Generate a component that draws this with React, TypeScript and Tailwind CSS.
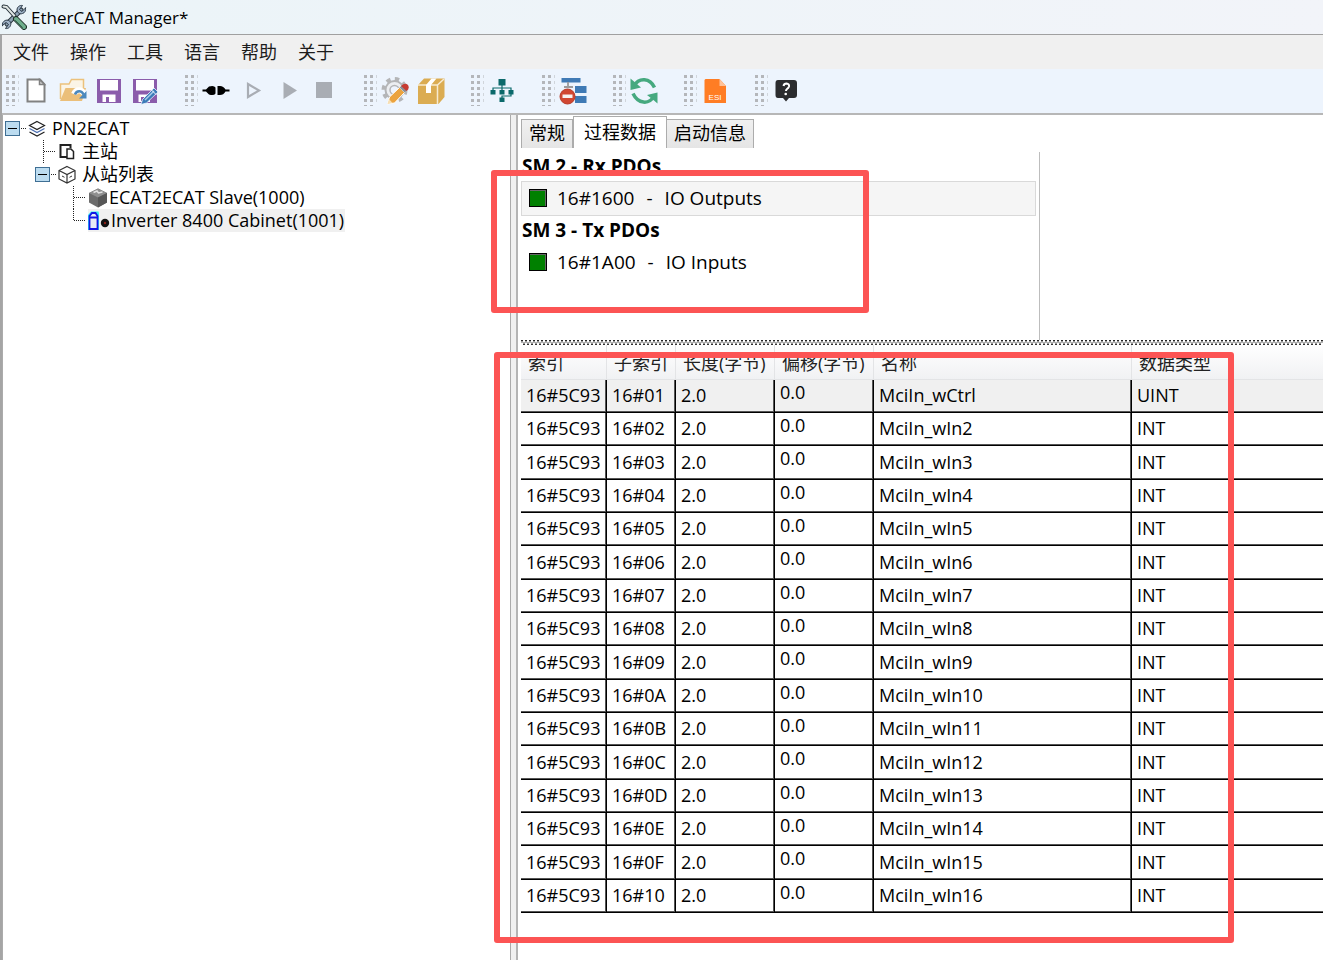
import React from 'react';

const menus = ['文件', '操作', '工具', '语言', '帮助', '关于'];

const entries = [
  { sub: '16#01', name: 'MciIn_wCtrl', type: 'UINT' },
  { sub: '16#02', name: 'MciIn_wIn2', type: 'INT' },
  { sub: '16#03', name: 'MciIn_wIn3', type: 'INT' },
  { sub: '16#04', name: 'MciIn_wIn4', type: 'INT' },
  { sub: '16#05', name: 'MciIn_wIn5', type: 'INT' },
  { sub: '16#06', name: 'MciIn_wIn6', type: 'INT' },
  { sub: '16#07', name: 'MciIn_wIn7', type: 'INT' },
  { sub: '16#08', name: 'MciIn_wIn8', type: 'INT' },
  { sub: '16#09', name: 'MciIn_wIn9', type: 'INT' },
  { sub: '16#0A', name: 'MciIn_wIn10', type: 'INT' },
  { sub: '16#0B', name: 'MciIn_wIn11', type: 'INT' },
  { sub: '16#0C', name: 'MciIn_wIn12', type: 'INT' },
  { sub: '16#0D', name: 'MciIn_wIn13', type: 'INT' },
  { sub: '16#0E', name: 'MciIn_wIn14', type: 'INT' },
  { sub: '16#0F', name: 'MciIn_wIn15', type: 'INT' },
  { sub: '16#10', name: 'MciIn_wIn16', type: 'INT' }
];

const columns = ['索引', '子索引', '长度(字节)', '偏移(字节)', '名称', '数据类型'];

const ToolsLogo = () => (
  <svg width="26" height="26" viewBox="0 0 26 26" fill="none" strokeLinecap="round">
    <path d="M6 20 L20 6" stroke="#26323a" strokeWidth="5" />
    <path d="M6 20 L20 6" stroke="#8fa3b5" strokeWidth="3" />
    <path d="M24.500 4 L21 7.500 L18.500 5.500 L21.500 1.500 C18.500 1 16 3 16 6 C16.500 9 19 10.500 21.500 9.500 C24 8.800 25 6.500 24.500 4Z" fill="#9fb2c6" stroke="#2c3a48" />
    <path d="M1.500 21.500 L5 18.500 L7.500 20.500 L4.500 24.500 C7.500 25 10 22.500 9.800 19.500 C9.500 16.500 6.500 15.500 4.200 16.500 C2 17.500 1 19.500 1.500 21.500Z" fill="#9fb2c6" stroke="#2c3a48" />
    <path d="M2.500 2.500 L5.500 3 L13.500 12" stroke="#26323a" strokeWidth="4" />
    <path d="M2.500 2.500 L5.500 3 L13.500 12" stroke="#dfe6e4" strokeWidth="2" />
    <path d="M15 15 L23 23" stroke="#1f2f29" strokeWidth="6" />
    <path d="M15 15 L23 23" stroke="#6fae8c" strokeWidth="4" />
    <path d="M14.500 16.500 L21.500 23.500" stroke="#34644c" strokeWidth="1" />
  </svg>
);

const Grip = () => (
  <svg width="13" height="32" viewBox="0 0 13 32" fill="#b4b6ba" className="shrink-0">
    {[0, 6, 12, 18, 24].map((y) => (
      <g key={y}>
        <rect x="0" y={y} width="3" height="3" />
        <rect x="6" y={y} width="3" height="3" />
        <rect x="12" y={y} width="1" height="3" opacity="0.5" />
      </g>
    ))}
    <rect x="0" y="30" width="3" height="1" />
    <rect x="6" y="30" width="3" height="1" />
  </svg>
);

const NewIcon = () => (
  <svg width="28" height="28" viewBox="0 0 28 28">
    <path d="M4.500 2.500 H17 L21.500 7.500 V24.500 H4.500Z" fill="#fff" stroke="#818181" strokeWidth="2" />
    <path d="M16.500 2.500 V7.500 H21.500Z" fill="#d5d5d5" stroke="#818181" strokeWidth="1.500" />
  </svg>
);

const OpenIcon = () => (
  <svg width="28" height="28" viewBox="0 0 28 28">
    <path d="M1.500 22 V7 H10 L12.500 2.500 H24.500 V11" fill="#fbf4e6" stroke="#ecc17c" strokeWidth="1.500" />
    <path d="M1 24 L6.500 11 H27 L23 24Z" fill="#ebbf7a" />
    <path d="M15 17 C17 12 23 12 25 17" fill="none" stroke="#fff" strokeWidth="6" />
    <path d="M16 17.500 C17.500 13.500 22.500 13 24.500 17.500" fill="none" stroke="#4a88bd" strokeWidth="2.500" />
    <path d="M27.500 14 V21.500 H20Z" fill="#4a88bd" />
  </svg>
);

const SaveIcon = () => (
  <svg width="28" height="28" viewBox="0 0 28 28">
    <path d="M2 2 H26 V26 H2Z" fill="#8b5cab" />
    <path d="M5 3 H23 V13.500 H5Z" fill="#fff" />
    <path d="M7.500 17.500 H20.500 V25 H7.500Z" fill="#fff" />
    <path d="M11 20 H14 V25 H11Z" fill="#8b5cab" />
  </svg>
);

const SaveEditIcon = () => (
  <svg width="28" height="28" viewBox="0 0 28 28">
    <path d="M2 2 H26 V26 H2Z" fill="#8b5cab" />
    <path d="M5 3 H23 V13.500 H5Z" fill="#fff" />
    <path d="M7.500 17.500 H19 V25 H7.500Z" fill="#fff" />
    <path d="M10 20 H13 V24 H10Z" fill="#8b5cab" />
    <path d="M10 27.500 L11.500 22.500 L23 11 L27 15 L15.500 26Z" fill="#3b7bb8" stroke="#eef4fd" strokeWidth="0.800" />
    <path d="M14 23 L23 14" stroke="#a9cdea" strokeWidth="1.500" />
    <path d="M20.500 13 L25.500 18" stroke="#eef4fd" strokeWidth="1" />
  </svg>
);

const ConnectIcon = () => (
  <svg width="28" height="28" viewBox="0 0 28 28">
    <path d="M0.500 12.500 H4 L7 9.500 Q12 8 13.500 10.500 V16.500 Q12 19 7 17.500 L4 14.500 H0.500Z" />
    <path d="M15.500 9 H18 Q21.500 9 23.500 12.500 H27.500 V14.500 H23.500 Q21.500 18 18 18 H15.500Z" />
  </svg>
);

const StepIcon = () => (
  <svg width="28" height="28" viewBox="0 0 28 28">
    <path d="M10 7 L21 13.500 L10 20Z" fill="none" stroke="#a9adb4" strokeWidth="2.200" />
  </svg>
);

const RunIcon = () => (
  <svg width="28" height="28" viewBox="0 0 28 28">
    <path d="M9.500 5 L23 13.500 L9.500 22Z" fill="#a9adb4" />
  </svg>
);

const StopIcon = () => (
  <svg width="28" height="28" viewBox="0 0 28 28">
    <path d="M6 5 H22 V21 H6Z" fill="#a9adb4" />
  </svg>
);

const SettingsIcon = () => (
  <svg width="28" height="28" viewBox="0 0 28 28">
    <circle cx="13.500" cy="13" r="11" fill="none" stroke="#b4b5b7" strokeWidth="4" strokeDasharray="4.300 4.340" />
    <circle cx="13.500" cy="13" r="9" fill="#eceef1" stroke="#b4b5b7" strokeWidth="2" />
    <circle cx="13.500" cy="13" r="4.500" fill="#eef4fd" stroke="#b4b5b7" strokeWidth="1.500" />
    <path d="M6.500 27 L8.500 20 L18.500 10.500 L23.500 15.500 L13.500 26Z" fill="#eba33f" stroke="#fff" strokeWidth="1" />
    <path d="M6.500 27 L8 22 L11.500 26Z" fill="#f6dfb4" />
    <path d="M18.500 10.500 L21 8.500 L26 13 L23.500 15.500Z" fill="#8b8f94" />
    <path d="M20 9 Q24 5 27 8 Q29 11.500 25.500 14Z" fill="#c73b32" />
  </svg>
);

const PackageIcon = () => (
  <svg width="28" height="28" viewBox="0 0 28 28">
    <path d="M1 8 L7 1.500 H27.500 V20 L21.500 27 H1Z" fill="#dbac52" />
    <path d="M1 8 H20.500 L27 2 M20.500 8 V27" fill="none" stroke="#f7ead0" strokeWidth="1.500" />
    <path d="M9 8 L14.500 1.500 H19.500 L14 8 V16 L9 16Z" fill="#fff" />
  </svg>
);

const NetworkIcon = () => (
  <svg width="28" height="28" viewBox="0 0 28 28" fill="#0b696b">
    <path d="M10.500 2 H17.500 V8.500 H10.500Z M2.500 13 H7.500 V17.500 H2.500Z M11.500 13 H16.500 V17.500 H11.500Z M20.500 13 H25.500 V17.500 H20.500Z M11.500 20.500 H16.500 V25 H11.500Z" />
    <path d="M14 8 V13 M5 13.500 V11 H23 V13.500 M23 17 V19 H14 V21" fill="none" stroke="#0b696b" strokeWidth="1.200" />
  </svg>
);

const BlockIcon = () => (
  <svg width="28" height="28" viewBox="0 0 28 28">
    <path d="M2.500 1 H21.500 V5.500 H2.500Z M16 9 H27.500 V16 H16Z M16 19 H27.500 V26 H16Z" fill="#3f7ab5" />
    <path d="M9 5 V10 M5 10 H14" stroke="#9b9b9b" strokeWidth="1.800" />
    <circle cx="8.500" cy="19.500" r="7.500" fill="#d14631" stroke="#b83a27" />
    <path d="M3.500 17.500 H13.500 V21 H3.500Z" fill="#f7f1f0" />
  </svg>
);

const RefreshIcon = () => (
  <svg width="28" height="28" viewBox="0 0 28 28">
    <path d="M4 9 C9 0 20 1 24.500 10.500" fill="none" stroke="#46a97f" strokeWidth="3.500" />
    <path d="M0.500 1.500 L4 4.500 L11 10.500 L0.500 13Z" fill="#46a97f" />
    <path d="M24 19 C19 28 8 27 3 16.500" fill="none" stroke="#46a97f" strokeWidth="3.500" />
    <path d="M27.500 26.500 L24 23.500 L17 18 L27.500 15.500Z" fill="#46a97f" />
  </svg>
);

const EsiIcon = () => (
  <svg width="28" height="28" viewBox="0 0 28 28">
    <path d="M4.500 2 H18.500 L25 9 V26 H3.500 V3Z" fill="#ff7d24" />
    <path d="M18.500 2 L25 9 H18.500Z" fill="#ffc298" />
    <text x="14" y="23" textAnchor="middle" fill="#fff" fontSize="8" fontFamily="Liberation Sans, sans-serif">ESI</text>
  </svg>
);

const HelpIcon = () => (
  <svg width="28" height="28" viewBox="0 0 28 28">
    <path d="M6 3 H22 Q25 3 25 6 V18 Q25 21 22 21 H17 L14 24.500 L11 21 H6 Q3.500 21 3.500 18 V6 Q3.500 3 6 3Z" fill="#2b2c2e" />
    <path d="M11.500 9 Q12 6.500 14.500 6.500 Q17.500 6.800 17 9.500 Q16.500 11 15 12 Q14 12.800 14 14" fill="none" stroke="#fff" strokeWidth="2" />
    <circle cx="13.700" cy="17" r="1.300" fill="#fff" />
  </svg>
);

const toolGroups = [
  [
    { label: '新建', icon: NewIcon },
    { label: '打开', icon: OpenIcon },
    { label: '保存', icon: SaveIcon },
    { label: '另存为', icon: SaveEditIcon }
  ],
  [
    { label: '连接', icon: ConnectIcon },
    { label: '单步', icon: StepIcon },
    { label: '运行', icon: RunIcon },
    { label: '停止', icon: StopIcon }
  ],
  [
    { label: '设置', icon: SettingsIcon },
    { label: '打包', icon: PackageIcon }
  ],
  [{ label: '拓扑', icon: NetworkIcon }],
  [{ label: '禁用', icon: BlockIcon }],
  [{ label: '刷新', icon: RefreshIcon }],
  [{ label: 'ESI', icon: EsiIcon }],
  [{ label: '帮助', icon: HelpIcon }]
];

const LayersIcon = () => (
  <svg width="18" height="18" viewBox="0 0 18 18" fill="none" strokeWidth="1.200">
    <path d="M1.500 12 L9 16 L16.500 12" stroke="#222" />
    <path d="M1.500 8.500 L9 12.500 L16.500 8.500" stroke="#4a6db0" />
    <path d="M9 1.500 L16.500 5.500 L9 9.500 L1.500 5.500Z" stroke="#222" fill="#fff" />
  </svg>
);

const MasterIcon = () => (
  <svg width="18" height="18" viewBox="0 0 18 18" fill="#fff" stroke="#222" strokeWidth="1.500">
    <path d="M9 14 H2.500 V2 H12.500 V5" strokeWidth="2" />
    <path d="M9 6 H13 L15.500 8.500 V15.500 H9Z" />
  </svg>
);

const CubeIcon = () => (
  <svg width="20" height="20" viewBox="0 0 20 20" fill="none" stroke="#333" strokeWidth="1.200">
    <path d="M9 1.500 L17 5.500 V14 L9 18 L1 14 V5.500Z M1 5.500 L9 9.500 L17 5.500 M9 9.500 V18" />
    <path d="M4 11 L6.500 12.300 M11.500 12.300 L14 11" strokeWidth="1" />
  </svg>
);

const SlaveIcon = () => (
  <svg width="20" height="20" viewBox="0 0 20 20">
    <path d="M10 0.500 L19 5 V14.500 L10 19.500 L1 14.500 V5Z" fill="#6c6c6c" />
    <path d="M10 0.500 L19 5 L10 9.500 L1 5Z" fill="#8f8f8f" />
    <path d="M10 9.500 L19 5 V14.500 L10 19.500Z" fill="#575757" />
    <path d="M5.500 4.500 L9 3 L10.500 5 L14.500 4" stroke="#e3e3e3" strokeWidth="1.500" fill="none" />
  </svg>
);

const DriveIcon = () => (
  <svg width="22" height="20" viewBox="0 0 22 20">
    <path d="M0 4 L3 0.500 H10.500 L11 3 V19 H0Z" fill="#35e6f5" />
    <path d="M1.500 5 L4 2 H7.500 L9.500 5 V18 H1.500Z M1.500 6.500 H9.500" fill="#e8ecf5" stroke="#1414e6" strokeWidth="1.800" />
    <circle cx="17" cy="12" r="4.200" fill="#111" />
    <circle cx="17" cy="12" r="1.200" fill="#8a2018" />
  </svg>
);

// Dotted branch lines of the tree; "last" stops the trunk at the row centre.
const Branch = ({ last = false }: { last?: boolean }) => (
  <svg width="16" height="23" viewBox="0 0 16 23" fill="none" stroke="#222" strokeDasharray="1 1" className="shrink-0">
    <path d={last ? 'M2.5 0 V12 M3 11.5 H15' : 'M2.5 0 V23 M3 11.5 H15'} />
  </svg>
);

const Expander = ({ label }: { label: string }) => (
  <>
    <button
      aria-label={label}
      className="flex h-[15px] w-[15px] shrink-0 items-center justify-center border border-[#3f6f94] bg-[#bcdcf0]"
    >
      <span className="h-px w-[9px] bg-black" />
    </button>
    <svg width="8" height="1" viewBox="0 0 8 1" stroke="#222" strokeDasharray="1 1" className="shrink-0">
      <path d="M1 0.500 H7" />
    </svg>
  </>
);

const SplitterDots = () => (
  <svg className="block h-[5px] w-full">
    <defs>
      <pattern id="dots" width="4" height="5" patternUnits="userSpaceOnUse">
        <rect y="2" width="4" height="1" fill="#b0b0b0" />
        <rect width="2" height="1" fill="#222" />
        <rect y="1" width="2" height="1" fill="#999" />
        <rect x="2" y="3" width="2" height="1" fill="#999" />
        <rect x="2" y="4" width="2" height="1" fill="#333" />
      </pattern>
    </defs>
    <rect width="100%" height="5" fill="url(#dots)" />
  </svg>
);

const PdoItem = ({ id, index, name, selected = false }: { id: string; index: string; name: string; selected?: boolean }) => (
  <div className={`flex h-[35px] items-center border px-[7px] pb-px text-[19px] ${selected ? 'border-[#d9d9d9] bg-[#f5f5f5]' : 'border-transparent'}`}>
    <input
      id={id}
      type="checkbox"
      defaultChecked
      className="h-[18px] w-[18px] appearance-none border border-black bg-[#008000] shadow-[inset_-1px_1px_0_#666]"
    />
    <label htmlFor={id} className="ml-[10px] flex gap-3">
      <span>{index}</span>
      <span>-</span>
      <span>{name}</span>
    </label>
  </div>
);

const cell = 'border-b border-r border-black px-[5px] pb-px shadow-[inset_-1px_-1px_0_#555] last:border-r-0 last:shadow-[inset_0_-1px_0_#555]';

const App = () => {
  return (
    <div className="relative flex min-h-screen flex-col overflow-hidden bg-white font-['Open_Sans','Noto_Sans_CJK_SC',sans-serif] text-[18px] leading-[23px] text-black">
      {/* Title bar */}
      <header className="flex h-[35px] items-center gap-1 border-b border-[#a0a0a0] bg-linear-to-r from-[#ebf4f8] to-[#f2f4f9] pl-px">
        <ToolsLogo />
        <h1 className="text-[17px]">EtherCAT Manager*</h1>
      </header>

      <div className="flex grow flex-col border-l-2 border-[#a5a5a5]">
        {/* Menu */}
        <nav className="flex h-[34px] items-center gap-[21px] bg-[#f0f0f0] pl-[11px] text-[#1c1c1c]">
          {menus.map((menu) => (
            <button key={menu}>{menu}</button>
          ))}
        </nav>

        {/* Toolbar */}
        <div className="flex h-[46px] items-center gap-[22px] border-b-2 border-[#b7b7b7] bg-[#edf4fd] pl-1">
          {toolGroups.map((group) => (
            <div key={group[0].label} className="flex items-center">
              <Grip />
              {group.map((tool) => (
                <button key={tool.label} aria-label={tool.label} className="flex h-9 w-9 items-center justify-center">
                  <tool.icon />
                </button>
              ))}
            </div>
          ))}
        </div>

        <div className="flex grow">
          {/* Device tree */}
          <aside className="w-[509px] shrink-0 border-l border-r border-[#ababab] pt-[2px]">
            <ul>
              <li className="flex h-[23px] items-center pl-[2px]">
                <Expander label="PN2ECAT" />
                <LayersIcon />
                <span className="ml-[6px]">PN2ECAT</span>
              </li>
              <li className="flex h-[23px] items-center pl-[38px]">
                <Branch />
                <span className="ml-px"><MasterIcon /></span>
                <span className="ml-[6px]">主站</span>
              </li>
              <li className="flex h-[23px] items-center pl-[32px]">
                <Expander label="从站列表" />
                <CubeIcon />
                <span className="ml-1">从站列表</span>
              </li>
              <li className="flex h-[23px] items-center pl-[68px]">
                <Branch />
                <span className="ml-px"><SlaveIcon /></span>
                <span className="ml-px">ECAT2ECAT Slave(1000)</span>
              </li>
              <li className="flex h-[23px] items-center pl-[68px]">
                <Branch last />
                <span className="ml-px flex h-[23px] items-center gap-px bg-[#f0f0f0] pr-px">
                  <DriveIcon />
                  Inverter 8400 Cabinet(1001)
                </span>
              </li>
            </ul>
          </aside>

          <div className="w-[5px] shrink-0 bg-[#f0f0f0]" />

          {/* Slave details */}
          <main className="flex min-w-0 grow flex-col border-l-2 border-[#b4b4b4] pl-[3px]">
            <div role="tablist" className="flex h-[33px] items-end pt-px">
              <button role="tab" className="h-[29px] border border-b-0 border-[#acacac] bg-linear-to-b from-[#f0f0f0] to-[#e5e5e5] px-[7px] pb-px">
                常规
              </button>
              <button role="tab" aria-selected="true" className="h-8 border border-b-0 border-[#acacac] bg-white px-[10px]">
                过程数据
              </button>
              <button role="tab" className="h-[29px] border border-b-0 border-l-0 border-[#acacac] bg-linear-to-b from-[#f0f0f0] to-[#e5e5e5] px-[7px] pb-px">
                启动信息
              </button>
            </div>

            <div className="flex h-[192px] pt-1">
              <section className="w-[519px] shrink-0 border-r border-[#bdbdbd] pr-[3px]">
                <h2 className="pt-[3px] pb-[3px] pl-px text-[19px] font-bold">SM 2 - Rx PDOs</h2>
                <PdoItem id="rx-1600" index="16#1600" name="IO Outputs" selected />
                <h2 className="pt-[3px] pb-[3px] pl-px text-[19px] font-bold">SM 3 - Tx PDOs</h2>
                <PdoItem id="tx-1a00" index="16#1A00" name="IO Inputs" />
              </section>
            </div>

            <SplitterDots />

            <table className="w-full table-fixed border-separate border-spacing-0">
              <colgroup>
                <col className="w-[86px]" />
                <col className="w-[69px]" />
                <col className="w-[99px]" />
                <col className="w-[99px]" />
                <col className="w-[258px]" />
                <col />
              </colgroup>
              <thead>
                <tr className="h-[35px] bg-linear-to-b from-white to-[#f0f1f3]">
                  {columns.map((column) => (
                    <th key={column} className="border-r border-b border-[#e3e4e6] pt-[3px] pl-[7px] text-left font-normal whitespace-nowrap text-[#222] last:border-r-0">
                      {column}
                    </th>
                  ))}
                </tr>
              </thead>
              <tbody>
                {entries.map((entry) => (
                  <tr key={entry.sub} className="h-[33px] first:bg-[#f0f0f0] nth-[3n]:h-[34px]">
                    <td className={cell}>16#5C93</td>
                    <td className={cell}>{entry.sub}</td>
                    <td className={cell}>2.0</td>
                    <td className={`${cell} pt-px align-top`}>0.0</td>
                    <td className={cell}>{entry.name}</td>
                    <td className={cell}>{entry.type}</td>
                  </tr>
                ))}
              </tbody>
            </table>
          </main>
        </div>
      </div>

      {/* Highlight frames over the PDO list and the entry table */}
      <div className="pointer-events-none absolute top-[170px] left-[491px] h-[143px] w-[378px] rounded-[3px] border-6 border-[#fc5454]" />
      <div className="pointer-events-none absolute top-[352px] left-[494px] h-[591px] w-[740px] rounded-[3px] border-6 border-[#fc5454]" />
    </div>
  );
};

export default App;
